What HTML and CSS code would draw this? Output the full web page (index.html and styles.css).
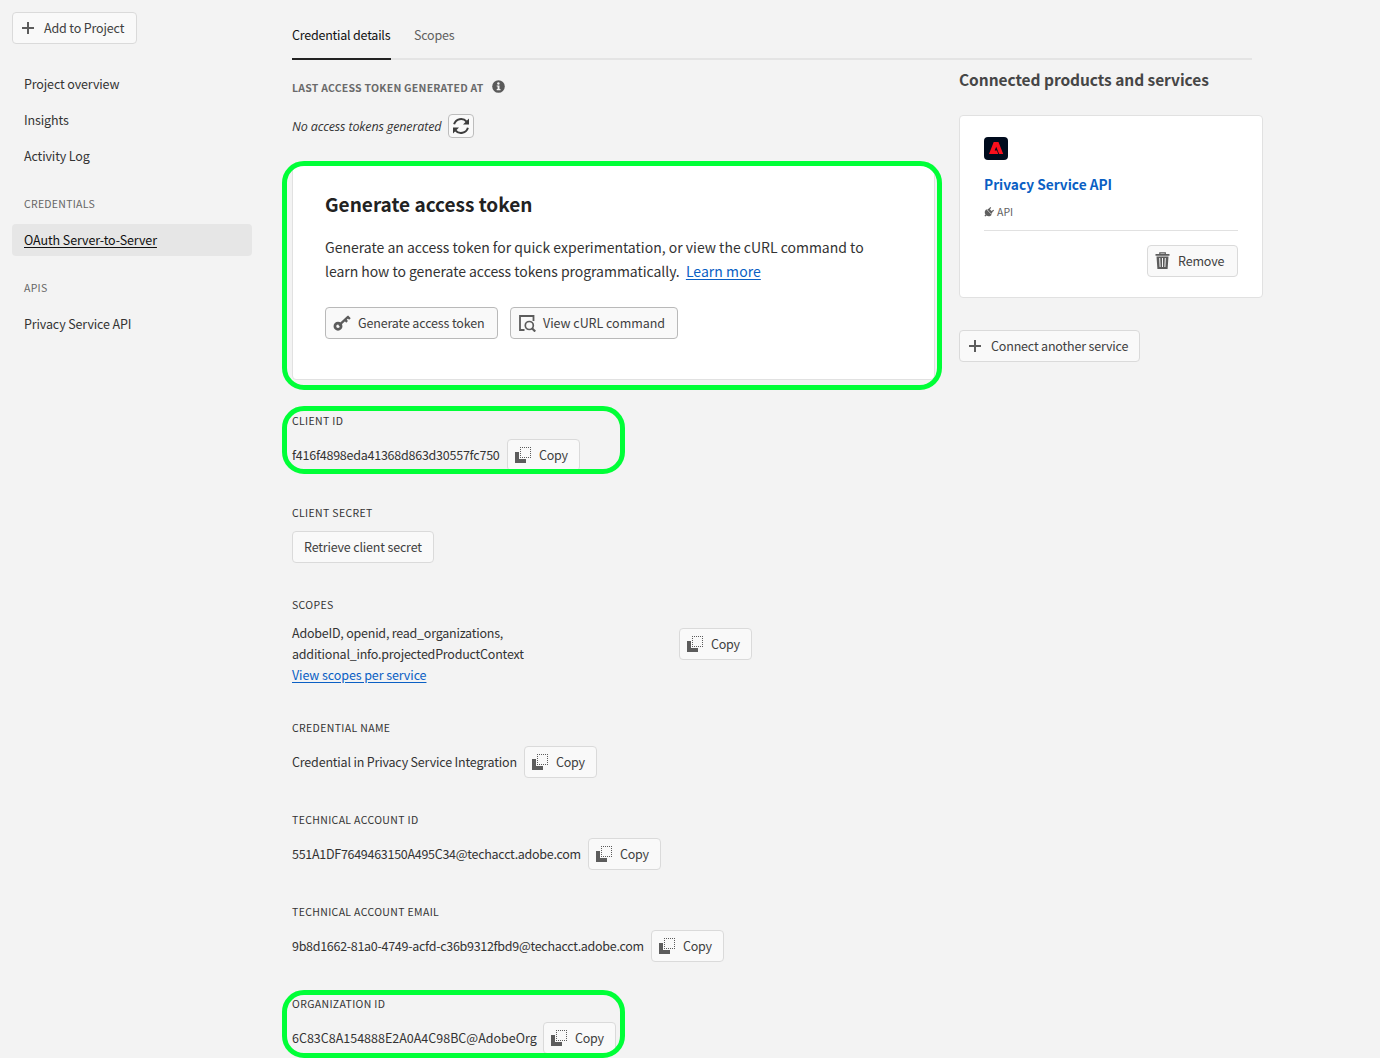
FILE: index.html
```html
<!DOCTYPE html>
<html lang="en">
<head>
<meta charset="utf-8">
<title>Credential details</title>
<link rel="stylesheet" href="styles.css">
</head>
<body>
<svg class="defs" aria-hidden="true">
  <symbol id="plus" viewBox="0 0 12 12"><path d="M6 0v12M0 6h12" stroke="currentColor" stroke-width="2" fill="none"/></symbol>
  <symbol id="copy" viewBox="0 0 16 16">
    <path d="M0 5h4v7h7v4H0z" fill="currentColor"/>
    <path d="M5 .5h11M5 10.5h11M5.5 2v8M15.5 2v8" stroke="currentColor" stroke-dasharray="1 1" fill="none"/>
  </symbol>
</svg>
<div class="page">
  <aside class="sidebar">
    <button class="btn add"><svg class="plus"><use href="#plus"/></svg><span>Add to Project</span></button>
    <nav class="nav">
      <a class="item">Project overview</a>
      <a class="item">Insights</a>
      <a class="item">Activity Log</a>
      <h2 class="group">CREDENTIALS</h2>
      <a class="item active">OAuth Server-to-Server</a>
      <h2 class="group">APIS</h2>
      <a class="item">Privacy Service API</a>
    </nav>
  </aside>
  <main class="main">
    <div class="tabs">
      <a class="tab selected">Credential details</a>
      <a class="tab">Scopes</a>
    </div>
    <div class="columns">
      <section class="details">
        <div class="last-label"><span>LAST ACCESS TOKEN GENERATED AT</span>
          <svg class="info" viewBox="0 0 13 13"><circle cx="6.5" cy="6.5" r="6.3" fill="#5a5a5a"/><circle cx="6.4" cy="3.5" r="1.2" fill="#f3f3f3"/><path d="M4.7 5.4h2.8v3.7h1v1.2H4.7V9.1h.9V6.600h-.9z" fill="#f3f3f3"/></svg>
        </div>
        <div class="last-value"><em>No access tokens generated</em>
          <button class="btn refresh"><svg viewBox="0 0 18 18" width="18" height="18"><path d="M2.100 7.300A7.200 7.200 0 0 1 14.600 4.700M15.900 10.700A7.200 7.200 0 0 1 3.400 13.300" fill="none" stroke="#3d3d3d" stroke-width="2"/><path d="M17 1.600v6h-6zM1 16.400v-6h6z" fill="#3d3d3d"/></svg></button>
        </div>
        <div class="card token">
          <h1 class="token-title">Generate access token</h1>
          <p class="token-text"><span class="line1">Generate an access token for quick experimentation, or view the cURL command to</span><br><span class="line2">learn how to generate access tokens programmatically.</span> <a class="link more">Learn more</a></p>
          <div class="actions">
            <button class="btn strong gen"><svg viewBox="0 0 18 18" width="18" height="18"><circle cx="5" cy="12.200" r="3.100" fill="none" stroke="currentColor" stroke-width="2.700"/><path d="M7 10.300 15.300 2.600M11.800 5.400l2.300 2.500M14.300 2.300l2.600 2.700" fill="none" stroke="currentColor" stroke-width="2.300"/><path d="M4.800 10.500h2.600v2.600z" fill="currentColor"/></svg><span>Generate access token</span></button>
            <button class="btn strong curl"><svg viewBox="0 0 18 18" width="18" height="18"><path d="M6.500 16H2V2h13.500v5" fill="none" stroke="currentColor" stroke-width="1.800"/><circle cx="11.300" cy="11.500" r="4" fill="none" stroke="currentColor" stroke-width="1.700"/><path d="m14 14.300 3.200 3.200" stroke="currentColor" stroke-width="2.200"/></svg><span>View cURL command</span></button>
          </div>
          <div class="ring ring-card"></div>
        </div>
        <div class="field">
          <h3 class="label">CLIENT ID</h3>
          <div class="row"><span class="v-client">f416f4898eda41368d863d30557fc750</span><button class="btn copy"><svg><use href="#copy"/></svg><span>Copy</span></button></div>
          <div class="ring ring-field"></div>
        </div>
        <div class="field">
          <h3 class="label">CLIENT SECRET</h3>
          <div class="row"><button class="btn secret"><span>Retrieve client secret</span></button></div>
        </div>
        <div class="field">
          <h3 class="label">SCOPES</h3>
          <div class="row scopes"><div class="scope-list">AdobeID, openid, read_organizations,<br>additional_info.projectedProductContext<br><a class="link per-service">View scopes per service</a></div><button class="btn copy"><svg><use href="#copy"/></svg><span>Copy</span></button></div>
        </div>
        <div class="field">
          <h3 class="label">CREDENTIAL NAME</h3>
          <div class="row"><span class="v-name">Credential in Privacy Service Integration</span><button class="btn copy"><svg><use href="#copy"/></svg><span>Copy</span></button></div>
        </div>
        <div class="field">
          <h3 class="label">TECHNICAL ACCOUNT ID</h3>
          <div class="row"><span class="v-account">551A1DF7649463150A495C34@techacct.adobe.com</span><button class="btn copy"><svg><use href="#copy"/></svg><span>Copy</span></button></div>
        </div>
        <div class="field">
          <h3 class="label">TECHNICAL ACCOUNT EMAIL</h3>
          <div class="row"><span class="v-email">9b8d1662-81a0-4749-acfd-c36b9312fbd9@techacct.adobe.com</span><button class="btn copy"><svg><use href="#copy"/></svg><span>Copy</span></button></div>
        </div>
        <div class="field">
          <h3 class="label">ORGANIZATION ID</h3>
          <div class="row"><span class="v-org">6C83C8A154888E2A0A4C98BC@AdobeOrg</span><button class="btn copy"><svg><use href="#copy"/></svg><span>Copy</span></button></div>
          <div class="ring ring-field ring-org"></div>
        </div>
      </section>
      <section class="connected">
        <h2 class="connected-title">Connected products and services</h2>
        <div class="card product">
          <svg class="logo" viewBox="0 0 24 23"><rect width="24" height="23" rx="4" fill="#000b1d"/><path fill="#fa0f1c" fill-rule="evenodd" d="M9.700 5h4.800L19.200 17h-4.100L12.200 9.700 10.700 13.400h2.300L14.200 17H5z"/></svg>
          <a class="product-name">Privacy Service API</a>
          <div class="product-type"><svg viewBox="0 0 10 10" width="10" height="10"><path d="M2.300 2.300 7.700 7.700C6.200 9.600 3.800 9.600 2.500 8.500L1.300 9.600.4 8.700l1.100-1.200C.2 6.200.6 3.600 2.300 2.300z" fill="#5f5f5f"/><path d="M3.200 2.600 5 1.500 8.500 5 7.400 7z" fill="#5f5f5f"/><path d="M5 2.600 6.700.4M7.300 5 9.700 3.100" stroke="#5f5f5f" stroke-width="1.200"/></svg><span>API</span></div>
          <div class="product-actions"><button class="btn remove"><svg viewBox="0 0 16 18" width="16" height="18"><path d="M.5 2.100h14v1.700H.5zM1.500 4.600h12l-.9 12.400H2.400z" fill="currentColor"/><path d="M4.800 2.500V.8h5.500v1.700" fill="none" stroke="currentColor" stroke-width="1.200"/><path d="m4.700 6 .4 9M7.500 6v9M10.300 6l-.4 9" stroke="#f9f9f9" stroke-width="1"/></svg><span>Remove</span></button></div>
        </div>
        <button class="btn connect"><svg class="plus"><use href="#plus"/></svg><span>Connect another service</span></button>
      </section>
    </div>
  </main>
</div>
</body>
</html>
```
FILE: styles.css
```css
* { box-sizing: border-box; }
body {
  margin: 0;
  height: 1058px;
  overflow: hidden;
  background: #f3f3f3;
  color: #333;
  font: 400 12.5px/20px "Noto Sans CJK SC", "Noto Sans", sans-serif;
  white-space: nowrap;
}
h1, h2, h3, p { margin: 0; }
.defs { display: none; }
.page { display: flex; height: 1058px; }

.btn {
  display: inline-flex;
  align-items: center;
  flex: none;
  height: 32px;
  margin: 0;
  padding: 0;
  border: 1px solid #dadada;
  border-radius: 4px;
  background: #f9f9f9;
  color: #5c5c5c;
  font: 400 12.5px/20px "Noto Sans CJK SC", "Noto Sans", sans-serif;
  letter-spacing: -.15px;
  white-space: nowrap;
}
.btn span { color: #404040; }
.btn svg { flex: none; }
.plus { width: 12px; height: 12px; }

.sidebar { width: 252px; padding: 12px 0 0 12px; }
.add { width: 125px; padding-left: 9px; gap: 10px; }
.nav { display: flex; flex-direction: column; gap: 4px; margin-top: 24px; }
.item {
  height: 32px;
  padding: 6px 12px;
  border-radius: 4px;
  letter-spacing: -.13px;
}
.item.active { background: #e6e6e6; color: #111; text-decoration: underline; text-underline-offset: 1.5px; letter-spacing: -.09px; }
.group {
  height: 32px;
  margin-top: 12px;
  padding: 6px 12px;
  color: #666;
  font-size: 10.5px;
  font-weight: 400;
  letter-spacing: .27px;
}

.main { width: 960px; margin-left: 40px; }
.tabs { display: flex; gap: 23px; height: 60px; border-bottom: 2px solid #e4e4e4; }
.tab { height: 60px; padding-top: 25px; color: #606060; letter-spacing: -.22px; }
.tab.selected { width: 99px; color: #111; border-bottom: 2px solid #222; }
.columns { display: flex; gap: 24px; }
.details { flex: none; width: 643px; }

.last-label {
  display: flex;
  align-items: center;
  gap: 8px;
  height: 14px;
  margin-top: 21px;
  color: #6a6a6a;
  font-size: 10.5px;
  font-weight: 700;
  letter-spacing: .23px;
}
.info { width: 13px; height: 13px; margin-top: -3px; }
.last-value { display: flex; align-items: center; height: 24px; margin-top: 19px; }
.last-value em { width: 156px; padding-top: 2px; font-family: "Open Sans", sans-serif; letter-spacing: -.13px; }
.refresh { width: 26px; height: 24px; justify-content: center; border-color: #bdbdbd; }

.card { position: relative; background: #fff; border: 1px solid #e1e1e1; border-radius: 4px; }
.token { height: 216px; margin-top: 26px; padding: 24px 32px; }
.token-title { color: #222; font-size: 19px; line-height: 30px; font-weight: 700; }
.token-text { margin-top: 16px; font-size: 14px; line-height: 24px; }
.line2 { letter-spacing: -.04px; }
.more { margin-left: 3px; letter-spacing: .05px; }
.link { color: #0a5fc4; text-decoration: underline; text-underline-offset: 1.5px; }
.actions { display: flex; gap: 12px; margin-top: 24px; }
.strong { border-color: #b9b9b9; }
.gen { width: 173px; padding-left: 7px; gap: 7px; }
.curl { width: 168px; padding-left: 7px; gap: 7px; letter-spacing: -.03px; }

.field { position: relative; margin-bottom: 35px; }
.token + .field { margin-top: 34px; }
.label { height: 14px; line-height: 14px; font-size: 10.5px; font-weight: 400; letter-spacing: .35px; }
.row { display: flex; align-items: center; gap: 7px; margin-top: 11px; height: 32px; }
.copy { width: 73px; padding-left: 7px; gap: 8px; letter-spacing: -.25px; }
.copy svg { width: 16px; height: 16px; }
.secret { padding-left: 11px; width: 142px; letter-spacing: -.17px; }
.scopes { height: 63px; align-items: flex-start; gap: 0; }
.scopes .copy { margin-top: 5px; }
.scope-list { width: 387px; margin-top: -1px; line-height: 21px; letter-spacing: -.22px; }
.per-service { letter-spacing: -.09px; }
.v-client { width: 208px; letter-spacing: -.24px; }
.v-name { width: 225px; letter-spacing: -.18px; }
.v-account { width: 289px; letter-spacing: -.28px; }
.v-email { width: 352px; letter-spacing: -.29px; }
.v-org { width: 244px; letter-spacing: 0; }

.ring { position: absolute; border: 5px solid #00ff37; border-radius: 22px; }
.ring-card { left: -11px; top: -4px; width: 660px; height: 229px; }
.ring-field { left: -10px; top: -8px; width: 343px; height: 68px; }
.ring-org { top: -7px; }

.connected { flex: none; width: 304px; padding-top: 7px; }
.connected-title { color: #464646; font-size: 15.5px; line-height: 24px; font-weight: 700; letter-spacing: -.05px; }
.product { display: flex; flex-direction: column; height: 183px; margin-top: 24px; padding: 21px 24px 20px; }
.logo { width: 24px; height: 23px; }
.product-name { margin-top: 12px; color: #0a5fc4; font-size: 13.7px; line-height: 24px; font-weight: 700; }
.product-type { display: flex; align-items: center; gap: 3px; height: 16px; margin-top: 8px; font-size: 10.5px; color: #5f5f5f; }
.product-actions { display: flex; justify-content: flex-end; margin-top: 10px; padding-top: 14px; border-top: 1px solid #e1e1e1; }
.remove { width: 91px; padding-left: 7px; gap: 7px; }
.connect { width: 181px; margin-top: 32px; padding-left: 9px; gap: 10px; letter-spacing: -.18px; }
```
